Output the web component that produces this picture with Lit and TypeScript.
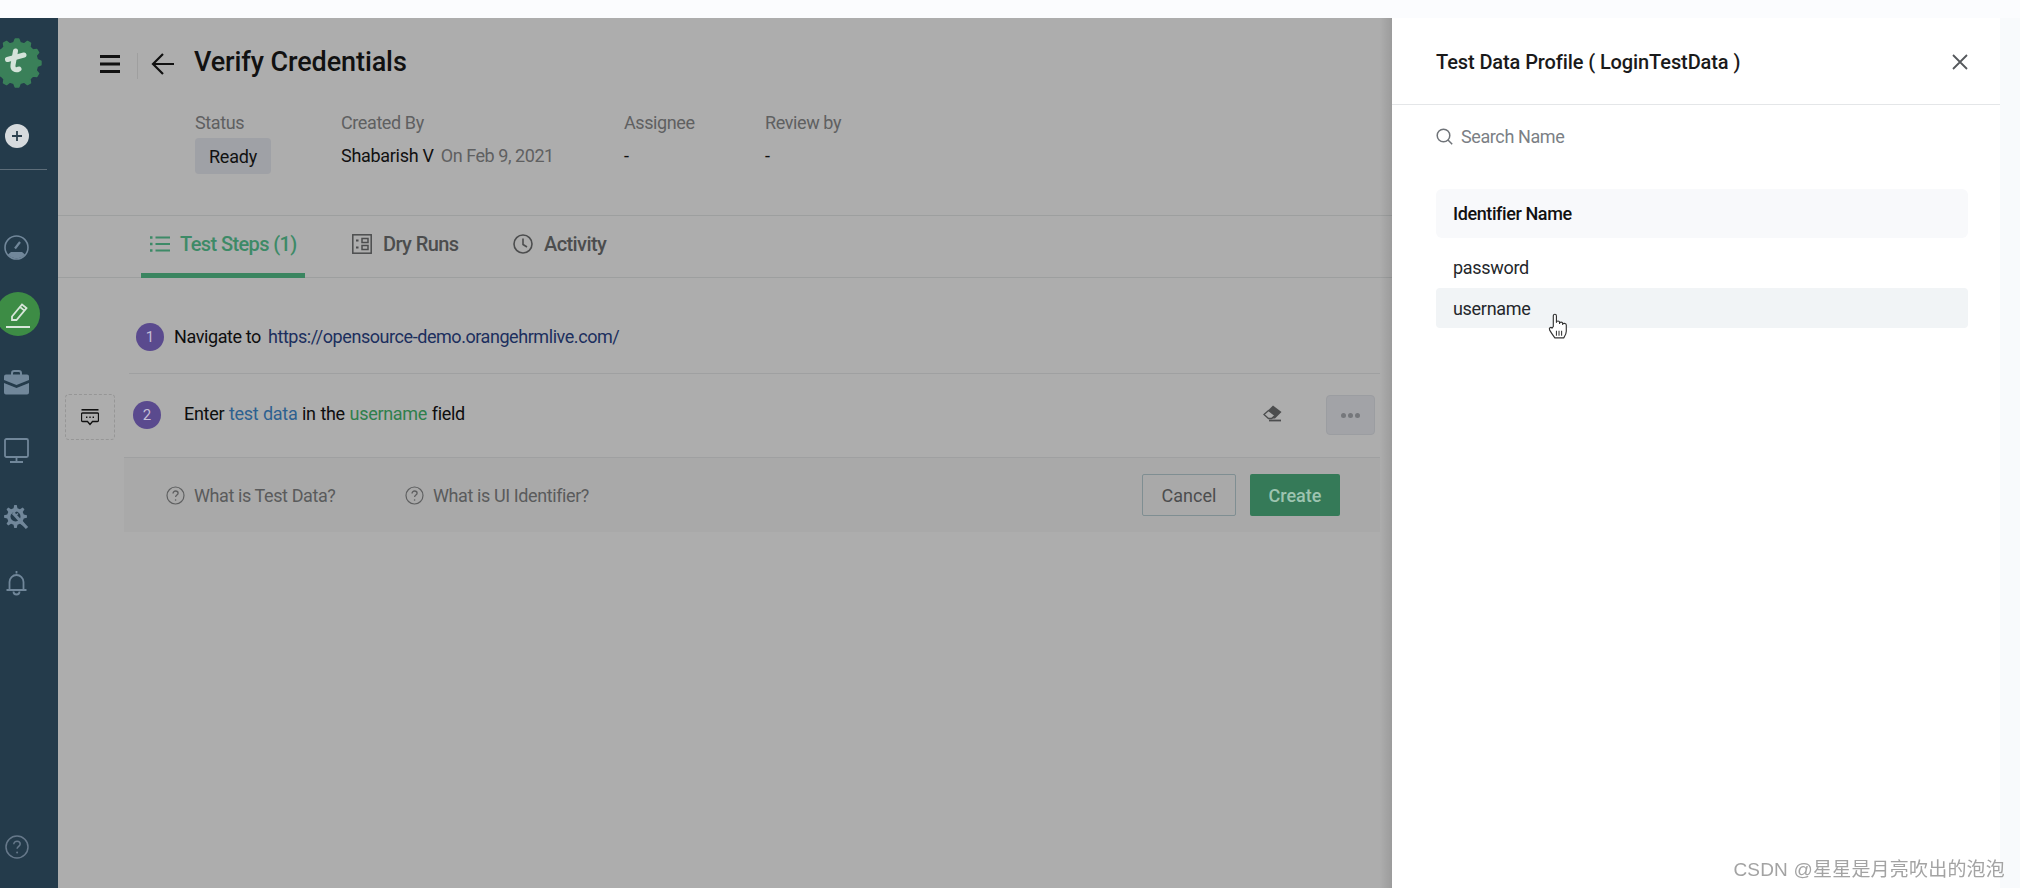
import { LitElement, html, css } from "lit";
import { customElement } from "lit/decorators.js";

function gearPath(cx: number, cy: number, ro: number, ri: number, teeth: number) {
  const pts: string[] = [];
  const step = (Math.PI * 2) / teeth;
  for (let i = 0; i < teeth; i++) {
    const a = i * step;
    const offs: [number, number][] = [[-0.3, ri], [-0.14, ro], [0.14, ro], [0.3, ri]];
    for (const [o, r] of offs) {
      const t = a + o * step;
      pts.push(`${(cx + r * Math.cos(t)).toFixed(2)} ${(cy + r * Math.sin(t)).toFixed(2)}`);
    }
  }
  return "M" + pts.join("L") + "Z";
}

@customElement("app-root")
export class AppRoot extends LitElement {
  static styles = css`
    :host { display: block; width: 2020px; height: 888px; overflow: hidden; background: #fbfcfe; font-family: Roboto, "Liberation Sans", sans-serif; color: #0e0e0e; }
    * { box-sizing: border-box; }
    svg { display: block; flex: none; }
    .top { height: 18px; background: #fbfcfe; }
    .frame { display: flex; height: 870px; filter: blur(0.45px); }

    .side { width: 58px; flex: none; background: #243b4b; display: flex; flex-direction: column; align-items: flex-start; overflow: hidden; }
    .slot { width: 33px; display: flex; justify-content: center; flex: none; }
    .logo { margin-top: 20px; height: 50px; width: 42px; }
    .plus { margin-top: 36px; }
    .rule { width: 47px; height: 1px; background: #5d6d79; margin-top: 21px; flex: none; }
    .dash { margin-top: 65px; }
    .pen { margin-top: 32px; width: 44px; height: 44px; margin-left: -4px; border-radius: 50%; background: #3d8c45; display: flex; align-items: center; justify-content: center; }
    .case { margin-top: 34px; }
    .mon { margin-top: 43px; }
    .gear { margin-top: 42px; }
    .bell { margin-top: 40px; }
    .help { margin-top: auto; margin-bottom: 29px; }

    .main { flex: none; width: 1334px; background: #adadad; position: relative; display: flex; flex-direction: column; }
    .shade { position: absolute; right: 0; top: 0; bottom: 0; width: 12px; background: linear-gradient(to right, rgba(0,0,0,0), rgba(0,0,0,.1)); }

    .head { height: 198px; flex: none; border-bottom: 1px solid #9d9f9f; padding: 29px 0 0 42px; }
    .titlebar { display: flex; align-items: flex-start; height: 60px; }
    .vsep { width: 1px; height: 26px; background: #9f9f9f; margin: 6px 13px 0 17px; }
    .arrow { margin: 5px 19px 0 0; }
    .menu { margin-top: 8px; }
    h1 { margin: 0; font-size: 27px; line-height: 30px; font-weight: 500; letter-spacing: -0.1px; color: #111; }
    .meta { display: flex; padding-left: 95px; margin-top: 6px; }
    .col { font-size: 18px; }
    .c1 { width: 146px; } .c2 { width: 283px; } .c3 { width: 141px; }
    .lbl { color: #5f6061; font-size: 18px; line-height: 20px; letter-spacing: -0.4px; }
    .val { color: #111; font-size: 18px; line-height: 20px; margin-top: 13px; letter-spacing: -0.3px; }
    .val span { color: #5f6061; margin-left: 3px; letter-spacing: -0.45px; }
    .badge { display: inline-flex; align-items: center; justify-content: center; width: 76px; height: 36px; margin-top: 5px; background: #9fa1a6; border-radius: 4px; font-size: 18px; color: #111; letter-spacing: -0.2px; }

    .tabs { height: 62px; flex: none; border-bottom: 1px solid #9d9f9f; display: flex; padding-left: 83px; }
    .tab { display: flex; align-items: center; gap: 11px; height: 62px; padding: 0 9px 7px; font-size: 20px; font-weight: 500; color: #4c4d4e; letter-spacing: -0.6px; white-space: nowrap; }
    .tab.on { width: 164px; gap: 10px; color: #3d8a67; border-bottom: 5px solid #3a8560; padding-bottom: 2px; margin-right: 38px; }
    .tab.dry { padding: 0 0 7px 9px; width: 161px; }

    .s1 { height: 96px; flex: none; margin: 0 12px 0 71px; border-bottom: 1px solid #9fa0a1; display: flex; align-items: center; padding: 22px 0 0 7px; font-size: 18px; letter-spacing: -0.4px; }
    .num { width: 28px; height: 28px; border-radius: 50%; background: #5a4a8e; color: #c4bfd6; font-size: 15px; display: flex; align-items: center; justify-content: center; flex: none; letter-spacing: 0; }
    .s1 .num { margin-right: 10px; margin-top: 0; }
    .s1 .url { color: #1c2f5e; margin-left: 7px; letter-spacing: -0.44px; }
    .s2row { display: flex; align-items: flex-start; flex: none; height: 84px; }
    .note { width: 50px; height: 46px; margin: 20px 0 0 7px; border: 1px dashed #969696; border-radius: 4px; display: flex; align-items: center; justify-content: center; flex: none; }
    .s2 { margin: 0 12px 0 9px; flex: 1; height: 84px; border-bottom: 1px solid #9fa0a1; display: flex; align-items: flex-start; font-size: 18px; letter-spacing: -0.3px; padding: 0 0 0 9px; }
    .s2 .num { margin-top: 27px; margin-right: 23px; }
    .s2 .text { margin-top: 27px; line-height: 26px; word-spacing: 0.5px; }
    .s2 .td { color: #2d6190; } .s2 .un { color: #2f7f4c; }
    .s2 .erase { margin: 31px 0 0 auto; }
    .dots { width: 49px; height: 40px; margin: 21px 5px 0 44px; background: #a2a3a7; border: 1px solid #9b9da1; border-radius: 4px; display: flex; align-items: center; justify-content: center; gap: 2px; flex: none; }
    .dots i { width: 5px; height: 5px; border-radius: 50%; background: #75777b; }
    .foot { height: 74px; flex: none; margin: 0 12px 0 66px; background: #a9a9a9; display: flex; align-items: center; padding: 0 40px 0 42px; color: #5a5b5c; font-size: 18px; letter-spacing: -0.4px; }
    .q { display: flex; align-items: center; gap: 9px; }
    .q.a { width: 239px; }
    .btns { margin-left: auto; display: flex; gap: 14px; }
    button { font: inherit; letter-spacing: 0; height: 42px; border-radius: 2px; }
    .cancel { width: 94px; border: 1px solid #7f8e92; background: transparent; color: #4c4d4e; }
    .create { width: 90px; border: 0; background: #357a58; color: #9dc4b0; font-weight: 500; }

    .panel { width: 608px; flex: none; background: #fff; display: flex; flex-direction: column; position: relative; }
    .phead { height: 87px; flex: none; border-bottom: 1px solid #e4e6e8; display: flex; align-items: center; justify-content: space-between; padding: 2px 32px 0 44px; font-size: 20px; font-weight: 500; color: #1a1a1a; letter-spacing: -0.1px; }
    .search { display: flex; align-items: center; gap: 8px; padding: 10px 0 0 44px; height: 52px; flex: none; color: #7b7f85; font-size: 18px; letter-spacing: -0.4px; }
    .table { margin: 32px 32px 0 44px; font-size: 18px; color: #24272b; position: relative; }
    .th { height: 49px; background: #f8f9fb; border-radius: 6px; display: flex; align-items: center; padding-left: 17px; font-weight: 500; color: #111; letter-spacing: -0.4px; }
    .tr { height: 41px; display: flex; align-items: center; padding-left: 17px; border-radius: 4px; letter-spacing: -0.3px; }
    .tr.p { margin-top: 9px; height: 41px; }
    .tr.u { background: #f1f4f6; height: 40px; }
    .hand { position: absolute; left: 112px; top: 124px; }
    .mark { position: absolute; right: -5px; bottom: 7px; font-family: "Liberation Sans", "Noto Sans CJK SC", sans-serif; font-size: 19px; color: #a3a3a3; letter-spacing: .2px; white-space: nowrap; }
    .gut { flex: 1; background: #f8fafc; }
  `;

  private qicon() {
    return html`<svg width="19" height="19" viewBox="0 0 19 19" fill="none" stroke="#5f6061" stroke-width="1.2"><circle cx="9.5" cy="9.5" r="8.5"/><path d="M7 7.4c0-1.5 1.2-2.4 2.6-2.4s2.5 1 2.5 2.2c0 1.8-2.5 1.9-2.5 3.8" stroke-width="1.3"/><circle cx="9.6" cy="14" r=".8" fill="#5f6061" stroke="none"/></svg>`;
  }

  render() {
    const side = "#71879a";
    return html`
      <div class="top"></div>
      <div class="frame">
        <nav class="side">
          <div class="logo"><svg width="42" height="50" viewBox="0 0 42 50">
            <path d=${gearPath(17, 25, 24, 20.5, 12)} fill="#3a8059" stroke="#3a8059" stroke-width="1.5" stroke-linejoin="round"/>
            <g fill="none" stroke="#d4e3da" stroke-linecap="round" stroke-width="5">
              <path d="M15.500 13l-2.500 14c-.5 4 2.500 6 6 4"/>
              <path d="M7.500 21.500L24 17"/>
            </g>
          </svg></div>
          <div class="slot plus"><svg width="24" height="24" viewBox="0 0 24 24"><circle cx="12" cy="12" r="12" fill="#d6dadd"/><path d="M12 7v10M7 12h10" stroke="#2b3f4d" stroke-width="1.8"/></svg></div>
          <div class="rule"></div>
          <div class="slot dash"><svg width="25" height="25" viewBox="0 0 25 25" fill="none" stroke=${side} stroke-width="1.6"><circle cx="12.5" cy="12.5" r="11.5"/><path d="M4 19.5a11.5 11.5 0 0 0 17 0l-3-2.5H7z" fill=${side} stroke="none"/><path d="M11 13.5l5-6.5" stroke-width="2.2"/></svg></div>
          <div class="pen"><svg width="26" height="30" viewBox="0 0 26 30" fill="none" stroke="#d8e6da" stroke-width="1.8"><path d="M7 17.5L17 5.5l4.5 3.6L11.5 21H7z"/><path d="M15 8l4.5 3.6"/><path d="M1 28h24" stroke-width="2"/></svg></div>
          <div class="slot case"><svg width="25" height="25" viewBox="0 0 25 25"><path d="M8 5V3.2C8 2 9 1 10.2 1h4.6C16 1 17 2 17 3.2V5" fill="none" stroke=${side} stroke-width="2"/><path d="M2 4.500h21a2 2 0 0 1 2 2V10l-12.500 5L0 10V6.500a2 2 0 0 1 2-2z" fill=${side}/><path d="M0 13l12.500 5L25 13v9.500a2 2 0 0 1-2 2H2a2 2 0 0 1-2-2z" fill=${side}/></svg></div>
          <div class="slot mon"><svg width="25" height="25" viewBox="0 0 25 25" fill="none" stroke=${side} stroke-width="1.8"><rect x="1" y="1" width="23" height="18" rx="1.500"/><path d="M12.500 19v4M6 24h13"/></svg></div>
          <div class="slot gear"><svg width="25" height="25" viewBox="0 0 25 25" fill="none"><path d=${gearPath(11.5, 11.5, 11.5, 8.5, 8)} fill=${side}/><circle cx="11.500" cy="11.500" r="5" fill="#243b4b"/><path d="M9 8l14 15" stroke=${side} stroke-width="3.200"/><path d="M6.500 9a4.500 4.500 0 0 1 5-3l-2 2.500 2 2 2.500-2" stroke=${side} stroke-width="1.500"/></svg></div>
          <div class="slot bell"><svg width="21" height="26" viewBox="0 0 21 26" fill="none" stroke=${side} stroke-width="1.800"><path d="M10.500 1v2.500M3.500 19v-7a7 7 0 0 1 14 0v7M0.500 20h20"/><path d="M7.500 21.500a3 3 0 0 0 6 0"/></svg></div>
          <div class="slot help"><svg width="24" height="24" viewBox="0 0 24 24" fill="none" stroke="#66788a" stroke-width="1.500"><circle cx="12" cy="12" r="11"/><path d="M8.800 9.300c0-2 1.500-3.100 3.300-3.100s3.100 1.200 3.100 2.800c0 2.300-3.100 2.400-3.100 4.800"/><circle cx="12.100" cy="17.500" r="1" fill="#66788a" stroke="none"/></svg></div>
        </nav>

        <main class="main">
          <section class="head">
            <div class="titlebar">
              <svg class="menu" width="20" height="18" viewBox="0 0 20 18" fill="#111"><rect width="20" height="3"/><rect y="7.500" width="20" height="3"/><rect y="15" width="20" height="3"/></svg>
              <div class="vsep"></div>
              <svg class="arrow" width="24" height="24" viewBox="0 0 24 24" fill="none" stroke="#111" stroke-width="2.200"><path d="M23 12H2M12 2L2 12l10 10"/></svg>
              <h1>Verify Credentials</h1>
            </div>
            <div class="meta">
              <div class="col c1"><div class="lbl">Status</div><div class="badge">Ready</div></div>
              <div class="col c2"><div class="lbl">Created By</div><div class="val">Shabarish V <span>On Feb 9, 2021</span></div></div>
              <div class="col c3"><div class="lbl">Assignee</div><div class="val">-</div></div>
              <div class="col"><div class="lbl">Review by</div><div class="val">-</div></div>
            </div>
          </section>

          <div class="tabs">
            <div class="tab on">
              <svg width="20" height="16" viewBox="0 0 20 16" fill="none" stroke="#3d8a67" stroke-width="1.800"><path d="M5.500 1.500H20M5.500 8H20M5.500 14.500H20"/><path d="M0 1.500h2.500M0 8h2.500M0 14.500h2.500" stroke-width="2.500"/></svg>
              Test Steps (1)
            </div>
            <div class="tab dry">
              <svg width="20" height="20" viewBox="0 0 20 20" fill="none" stroke="#4c4d4e" stroke-width="1.500"><rect x=".8" y=".8" width="18.400" height="18.400"/><rect x="10" y="4.500" width="6" height="4"/><rect x="10" y="11.500" width="6" height="4"/><path d="M4 6.500h2.500M4 13.500h2.500" stroke-width="2.200"/></svg>
              Dry Runs
            </div>
            <div class="tab">
              <svg width="20" height="20" viewBox="0 0 20 20" fill="none" stroke="#4c4d4e" stroke-width="1.600"><circle cx="10" cy="10" r="9"/><path d="M10 4.500v6l4 2.500"/></svg>
              Activity
            </div>
          </div>

          <div class="s1">
            <div class="num">1</div>
            <span>Navigate to</span><span class="url">https://opensource-demo.orangehrmlive.com/</span>
          </div>

          <div class="s2row">
            <div class="note"><svg width="18" height="17" viewBox="0 0 18 17" fill="none" stroke="#111" stroke-width="1.300"><path d="M0.500 0.800h17" stroke-width="1.600"/><path d="M1.500 4h15a1 1 0 0 1 1 1v6.500a1 1 0 0 1-1 1H11.500L9 15.500 6.500 12.500h-5a1 1 0 0 1-1-1V5a1 1 0 0 1 1-1z"/><path d="M5 8.200h1.400M8.300 8.200h1.400M11.600 8.200H13" stroke-width="1.600"/></svg></div>
            <div class="s2">
              <div class="num">2</div>
              <div class="text">Enter <span class="td">test data</span> in the <span class="un">username</span> field</div>
              <svg class="erase" width="19" height="17" viewBox="0 0 19 17"><path d="M10 0.500L18.500 7 12 13.500H6L1 9.500z" fill="#4c4d4e"/><path d="M1 9.500L5.500 5.500 12 10.500 8.500 13.500H5.500z" fill="#adadad" stroke="#4c4d4e" stroke-width="1.300"/><path d="M6 15.500h12" stroke="#4c4d4e" stroke-width="1.800"/></svg>
              <div class="dots"><i></i><i></i><i></i></div>
            </div>
          </div>

          <div class="foot">
            <div class="q a">${this.qicon()}What is Test Data?</div>
            <div class="q">${this.qicon()}What is UI Identifier?</div>
            <div class="btns"><button class="cancel">Cancel</button><button class="create">Create</button></div>
          </div>
          <div class="shade"></div>
        </main>

        <aside class="panel">
          <div class="phead">
            <span>Test Data Profile ( LoginTestData )</span>
            <svg width="16" height="16" viewBox="0 0 16 16" stroke="#55585c" stroke-width="1.800" fill="none"><path d="M1 1l14 14M15 1L1 15"/></svg>
          </div>
          <div class="search">
            <svg width="17" height="17" viewBox="0 0 17 17" fill="none" stroke="#6f7378" stroke-width="1.500"><circle cx="7.500" cy="7.500" r="6.300"/><path d="M12 12l4.200 4.200"/></svg>
            Search Name
          </div>
          <div class="table">
            <div class="th">Identifier Name</div>
            <div class="tr p">password</div>
            <div class="tr u">username</div>
            <svg class="hand" width="21" height="27" viewBox="0 0 20 26" fill="#fff" stroke="#333" stroke-width="1.100" stroke-linejoin="round"><path d="M5 13V3c0-2.400 3-2.400 3 0v6c0-1.700 3-1.700 3 0v1c0-1.600 3-1.600 3 0v1c0-1.500 3.500-1.500 3.500.5v6c0 3-1.500 5-2.500 6.500H6.500C5 22 3.500 20 1.500 16.500c-1-2 1-3.500 2.300-2z"/><path d="M8 17v5M10.500 17v5M13 17v5" stroke-width="1"/></svg>
          </div>
          <div class="mark">CSDN @星星是月亮吹出的泡泡</div>
        </aside>
        <div class="gut"></div>
      </div>
    `;
  }
}
